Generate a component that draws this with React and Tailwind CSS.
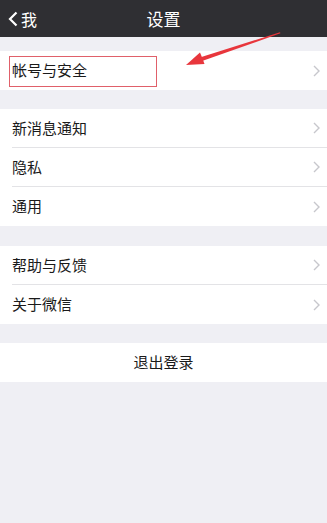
import React from "react";

const font = { fontFamily: '"Noto Sans CJK SC", "Noto Sans", sans-serif' };

function Chevron() {
  return (
    <svg width="7" height="12" viewBox="0 0 7 12" className="shrink-0">
      <path d="M1 1l5 5-5 5" fill="none" stroke="#c7c7cc" strokeWidth="1.4" />
    </svg>
  );
}

function Row({ label, last }) {
  return (
    <div className="flex h-[39px] items-center pl-3 bg-white">
      <div
        className={
          "flex h-full flex-1 items-center justify-between pr-[7px] " +
          (last ? "" : "border-b border-[#e3e3e6]")
        }
      >
        <span className="text-[15px] text-[#1a1a1a]">{label}</span>
        <Chevron />
      </div>
    </div>
  );
}

export default function App() {
  return (
    <div className="relative min-h-[523px] w-[327px] bg-[#efeff4]" style={font}>
      <div className="relative flex h-[37px] items-center justify-center bg-[#2f2f33]">
        <div className="absolute left-[8px] top-0 flex h-full items-center gap-[3px] text-white">
          <svg width="10" height="16" viewBox="0 0 10 16">
            <path d="M8.5 1.5L2 8l6.5 6.5" fill="none" stroke="#fff" strokeWidth="2.2" />
          </svg>
          <span className="text-[16px]">我</span>
        </div>
        <span className="text-[17px] text-white">设置</span>
      </div>

      <div className="pt-[14px]">
        <div className="relative">
          <Row label="帐号与安全" last />
          <div className="absolute left-[9px] top-[5px] h-[31px] w-[148px] border border-[#e0606a]" />
        </div>
      </div>

      <div className="pt-[19px]">
        <Row label="新消息通知" />
        <Row label="隐私" />
        <Row label="通用" last />
      </div>

      <div className="pt-[20px]">
        <Row label="帮助与反馈" />
        <Row label="关于微信" last />
      </div>

      <div className="pt-[19px]">
        <div className="flex h-[39px] items-center justify-center bg-white">
          <span className="text-[15px] text-[#1a1a1a]">退出登录</span>
        </div>
      </div>

      <svg
        className="pointer-events-none absolute left-0 top-0"
        width="327"
        height="120"
        viewBox="0 0 327 120"
      >
        <path d="M280 32.2 L280.4 33.3 L200 61.8 L199 57.8 Z" fill="#e8363c" />
        <path d="M186 65 L200 52.5 L202.5 58.5 L204.5 64 Z" fill="#e8363c" />
      </svg>
    </div>
  );
}
